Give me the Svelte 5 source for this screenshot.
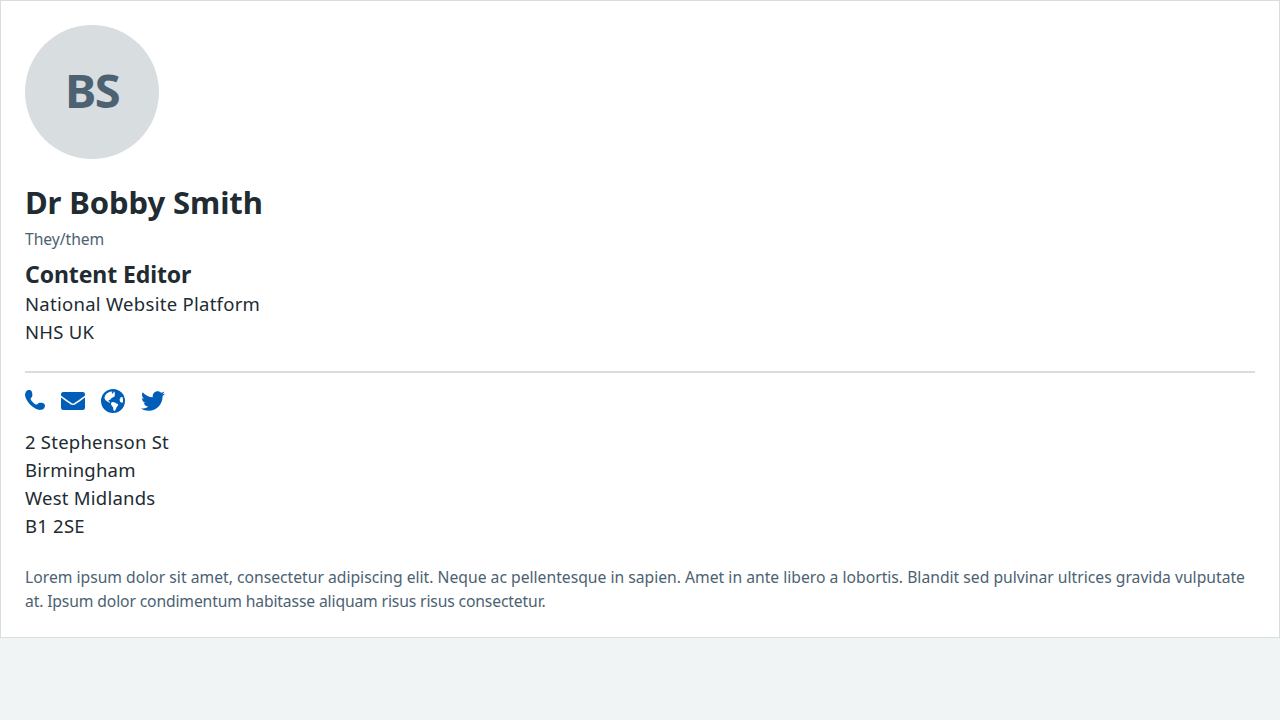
<script>
  const address = ['2 Stephenson St', 'Birmingham', 'West Midlands', 'B1 2SE'];
</script>

<article class="card">
  <div class="avatar"><span>BS</span></div>
  <h1>Dr Bobby Smith</h1>
  <p class="pronouns">They/them</p>
  <h2>Content Editor</h2>
  <p class="line platform">National Website Platform</p>
  <p class="line">NHS UK</p>
  <hr />
  <nav class="links">
    <a href="#phone" aria-label="Phone">
      <svg width="20" height="24" viewBox="0 0 20 24"><path d="M1.300 2.300C2.300 1.100 4.600.5 5.900 1.500c1.400 1.200 1.800 4.400 1.200 6-.4 1.100-1.500 1.500-1.500 2.400 0 1.300 4.200 5.600 5.700 5.600 1 0 1.400-1.100 2.500-1.600 1.600-.6 4.500-.2 5.600 1.100 1 1.200.6 3.600-.7 4.700-1.400 1.200-4 1.500-6 .9C7.500 18.900 2.300 13.700.4 8.100-.2 6.100.1 3.600 1.300 2.300z" /></svg>
    </a>
    <a href="#email" aria-label="Email">
      <svg width="24" height="24" viewBox="0 0 24 24"><path d="M2.250 3h19.500A2.250 2.250 0 0 1 24 5.250v1.200c-2.200 1.800-5.700 4.200-8.700 6.300-1.200.8-2.200 1.800-3.300 1.800s-2.100-1-3.300-1.800C5.700 10.650 2.200 8.250 0 6.450v-1.200A2.250 2.250 0 0 1 2.250 3z" /><path d="M0 8.500c2.200 1.700 5.100 3.700 7.800 5.600 1.400 1 2.700 2 4.200 2s2.800-1 4.200-2c2.700-1.900 5.600-3.900 7.800-5.600v10.250A2.250 2.250 0 0 1 21.750 21H2.250A2.250 2.250 0 0 1 0 18.750z" /></svg>
    </a>
    <a href="#website" aria-label="Website">
      <svg width="24" height="24" viewBox="0 0 24 24"><circle cx="12" cy="12" r="12" /><path class="land" d="M4 6.800C5.200 4.700 7.300 3.100 9.700 2.500l1.600.3-.6 1.300.7.600 1-.8.2-1.400 1 .4.300 2.100-.3 2.500-1.500.8-1 .5-1.300 1-.5 1-1.500.3-.3 1.100 1.300.6.2 1-1.700-.6-1.500-1.200-1.300-.7-1.100-2.300z" /><path class="land" d="M10.200 13.600l1.600-.6 2.200.4 1.400 1 1.700.6-.2 1.800-1.200 1.300-.7 2-1.300 1.900-1.200-.4-.4-3.400-1.200-1.300-.9-1.700z" /><path class="land" d="M18.600 10.200l1.400-2.300 1.400.2c.6 1.400.8 3.600.5 5.300l-1.300.3-1.700-1.500z" /></svg>
    </a>
    <a href="#twitter" aria-label="Twitter">
      <svg width="24" height="24" viewBox="0 0 512 512"><path d="M459.370 151.716c.325 4.548.325 9.097.325 13.645 0 138.720-105.583 298.558-298.558 298.558-59.452 0-114.680-17.219-161.137-47.106 8.447.974 16.568 1.299 25.340 1.299 49.055 0 94.213-16.568 130.274-44.832-46.132-.975-84.792-31.188-98.112-72.772 6.498.974 12.995 1.624 19.818 1.624 9.421 0 18.843-1.300 27.614-3.573-48.081-9.747-84.143-51.980-84.143-102.985v-1.299c13.969 7.797 30.214 12.670 47.431 13.319-28.264-18.843-46.781-51.005-46.781-87.391 0-19.492 5.197-37.360 14.294-52.954 51.655 63.675 129.300 105.258 216.365 109.807-1.624-7.797-2.599-15.918-2.599-24.040 0-57.828 46.782-104.934 104.934-104.934 30.213 0 57.502 12.670 76.670 33.137 23.715-4.548 46.456-13.320 66.599-25.340-7.798 24.366-24.366 44.833-46.132 57.827 21.117-2.273 41.584-8.122 60.426-16.243-14.292 20.791-32.161 39.308-52.628 54.253z" /></svg>
    </a>
  </nav>
  <address>
    {#each address as row}
      <div class="line">{row}</div>
    {/each}
  </address>
  <p class="bio"><span>Lorem ipsum dolor sit amet, consectetur adipiscing elit. Neque ac pellentesque in sapien. Amet in ante libero a lobortis. Blandit sed pulvinar ultrices gravida vulputate</span> <span class="last">at. Ipsum dolor condimentum habitasse aliquam risus risus consectetur.</span></p>
</article>

<style>
  :global(body) { background: #f0f4f5; }
  .card {
    box-sizing: border-box;
    border: 1px solid #d8dde0;
    background: #fff;
    padding: 24px;
    color: #212b32;
    font-family: "Noto Sans", "Open Sans", sans-serif;
  }
  h1, h2, p, address { margin: 0; font-style: normal; }
  .avatar {
    box-sizing: border-box;
    display: flex;
    align-items: center;
    justify-content: center;
    width: 134px;
    height: 134px;
    padding-bottom: 4px;
    border-radius: 50%;
    background: #d8dde0;
    color: #4c6272;
    font-size: 47px;
    line-height: 1;
    font-weight: 700;
    letter-spacing: -1.5px;
  }
  h1 { margin-top: 23px; font-size: 31px; line-height: 40px; font-weight: 700; letter-spacing: -0.1px; }
  .pronouns { margin: 5px 0 7px; color: #4c6272; font-size: 15.7px; line-height: 24px; letter-spacing: -0.05px; }
  h2 { font-size: 23px; line-height: 32px; font-weight: 700; letter-spacing: -0.1px; }
  .line { font-size: 18.5px; line-height: 28px; letter-spacing: 0.23px; }
  .platform { letter-spacing: 0.28px; }
  hr { margin: 25px 0 16px; border: 0; height: 2px; background: #d8dde0; }
  .links { display: flex; gap: 16px; height: 24px; margin-bottom: 15px; }
  .links a { display: block; height: 24px; }
  svg { display: block; fill: #005eb8; }
  .land { fill: #fff; }
  .bio { margin-top: 25px; color: #4c6272; font-size: 15.7px; line-height: 24px; }
  .bio span { display: block; white-space: nowrap; }
  .bio .last { letter-spacing: -0.14px; }
</style>
